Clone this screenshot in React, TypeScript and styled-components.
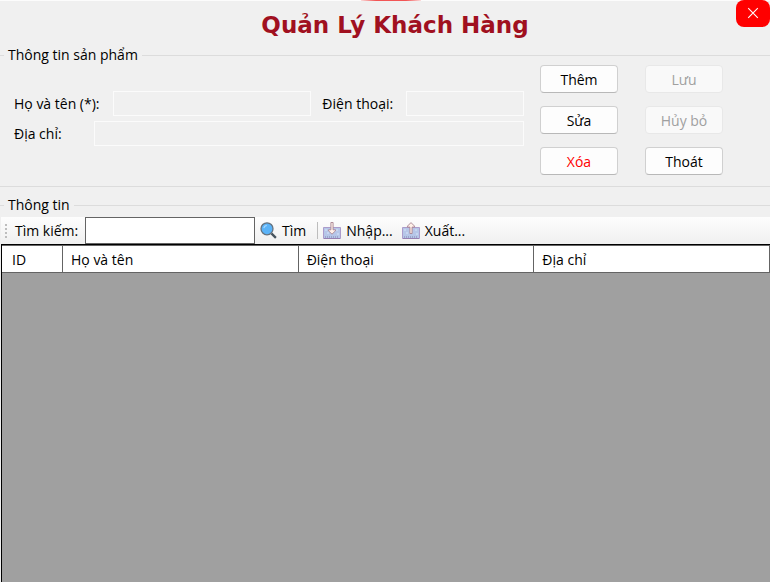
import React, { useState } from "react";
import styled, { createGlobalStyle } from "styled-components";

const GlobalStyle = createGlobalStyle`
  *, *::before, *::after { box-sizing: border-box; }
  body {
    margin: 0;
    background: #f0f0f0;
    color: #000;
    font: 14px/20px "Open Sans", "Noto Sans", sans-serif;
  }
  button, input { font: inherit; color: inherit; }
`;

const Window = styled.main`
  position: relative;
  display: flex;
  flex-direction: column;
  min-height: 100vh;
  border-top: 1px solid #fcfcfc;
`;

const TopAccent = styled.div`
  position: absolute;
  top: -1px;
  left: 50%;
  width: 60px;
  height: 1px;
  margin-left: -24px;
  background: linear-gradient(90deg, #fcdcdc, #f25555 25%, #f25555 75%, #fcdcdc);
`;

const Header = styled.header`
  display: flex;
  justify-content: center;
  height: 44px;
  padding: 8px 40px 0 60px;
`;

const Title = styled.h1`
  margin: 0;
  color: #a01020;
  font: bold 23px/32px "DejaVu Sans", sans-serif;
  white-space: nowrap;
`;

const CloseButton = styled.button`
  position: absolute;
  top: -1px;
  right: 0;
  display: flex;
  align-items: center;
  justify-content: center;
  width: 34px;
  height: 27px;
  padding: 0 0 2px;
  border: 0;
  border-radius: 8px;
  background: #ff0000;
  color: #fff;
`;

const FormGroup = styled.fieldset`
  min-width: 0;
  margin: 0;
  padding: 0;
  border: 0 solid #dcdcdc;
  border-width: 1px 0;
`;

const Legend = styled.legend`
  margin-left: 4px;
  padding: 0 4px;
`;

const ListGroup = styled.section`
  display: flex;
  flex: 1;
  flex-direction: column;
`;

const GroupHeading = styled.h2`
  display: flex;
  align-items: center;
  gap: 4px;
  margin: 8px 0 2px;
  font: inherit;
  &::before, &::after {
    content: "";
    width: 4px;
    height: 1px;
    background: #dcdcdc;
  }
  &::after { flex: 1; }
`;

const FormBody = styled.div`
  display: flex;
  gap: 16px;
  padding: 0 47px 11px 14px;
`;

const Fields = styled.div`
  display: flex;
  flex: 1;
  flex-direction: column;
  gap: 5px;
  min-width: 0;
  padding-top: 26px;
`;

const FieldRow = styled.div`
  display: flex;
  align-items: center;
`;

const FieldLabel = styled.label<{ $width: number; $gap?: number }>`
  flex: none;
  width: ${(p) => p.$width}px;
  margin-left: ${(p) => p.$gap ?? 0}px;
  white-space: nowrap;
`;

const FieldInput = styled.input<{ $grow: number }>`
  flex: ${(p) => p.$grow} 1 0;
  min-width: 0;
  height: 25px;
  padding: 0 4px;
  border: 1px solid #fbfbfb;
  background: #f0f0f0;
`;

const Actions = styled.div`
  display: grid;
  grid-template-columns: 78px 78px;
  grid-auto-rows: 28px;
  gap: 13px 27px;
`;

const ActionButton = styled.button<{ $danger?: boolean }>`
  padding: 1px 0 0;
  border: 1px solid #d0d0d0;
  border-bottom-color: #b8b8b8;
  border-radius: 4px;
  background: #fdfdfd;
  color: ${(p) => (p.$danger ? "#ff0000" : "#000")};
  &:disabled {
    border-color: #e8e8e8;
    background: #f9f9f9;
    color: #a0a0a0;
  }
`;

const Toolbar = styled.div`
  display: flex;
  align-items: center;
  height: 27px;
  margin-left: 1px;
  padding-left: 4px;
  background: linear-gradient(#fdfdfd, #f0f0f0);
`;

const Grip = styled.span`
  width: 2px;
  height: 14px;
  margin-right: 8px;
  background: repeating-linear-gradient(#bdbdbd 0 2px, transparent 2px 4px);
`;

const SearchLabel = styled.label`
  width: 70px;
  white-space: nowrap;
`;

const SearchInput = styled.input`
  width: 170px;
  height: 27px;
  padding: 0 4px;
  border: 1px solid #646464;
  background: #fff;
`;

const ToolButton = styled.button<{ $gap?: number }>`
  display: flex;
  align-items: center;
  gap: 5px;
  margin-left: ${(p) => p.$gap ?? 5}px;
  padding: 0;
  border: 0;
  background: none;
  white-space: nowrap;
  svg { flex: none; }
`;

const Separator = styled.span`
  width: 1px;
  height: 17px;
  margin-left: 11px;
  background: #bdbdbd;
`;

const GridArea = styled.div`
  flex: 1;
  margin-left: 1px;
  border-top: 1px solid #000;
  border-left: 1px solid #000;
  background: #a0a0a0;
`;

const Table = styled.table`
  width: 100%;
  border-spacing: 0;
  border-top: 1px solid #646464;
  table-layout: fixed;
`;

const HeadCell = styled.th<{ $width?: number }>`
  width: ${(p) => (p.$width ? `${p.$width}px` : "auto")};
  height: 27px;
  padding: 1px 8px 0;
  border-right: 1px solid #646464;
  border-bottom: 1px solid #646464;
  background: #fff;
  font-weight: normal;
  text-align: left;
  &:first-child { padding-left: 10px; }
`;

const CloseIcon = () => (
  <svg width="12" height="12" viewBox="0 0 12 12" stroke="currentColor" strokeWidth="1.1" aria-hidden="true">
    <path d="M1.2 1.2 10.8 10.8M10.8 1.2 1.2 10.8" />
  </svg>
);

const SearchIcon = () => (
  <svg width="17" height="17" viewBox="0 0 17 17" fill="none" aria-hidden="true">
    <path d="m11.4 11.4 4.5 4.5" stroke="#46535d" strokeWidth="2.3" />
    <circle cx="7" cy="6.8" r="6" fill="#5ab3f8" stroke="#65727f" strokeWidth="1.3" />
    <path d="M3.8 6.2a3.5 3.5 0 0 1 3-2.8" stroke="#a4d8ff" strokeWidth="1.2" />
  </svg>
);

const TransferIcon = ({ up = false }: { up?: boolean }) => (
  <svg width="18" height="18" viewBox="0 0 18 18" aria-hidden="true">
    <path d="M.5 5.5h17v11H.5z" fill="#b6c6e8" stroke="#ab9ccb" />
    <path d="M1 16.5h16" stroke="#9680b2" />
    <path d="M2.5 14v2M4.5 14v2M6.5 14v2M8.5 14v2M10.5 14v2M12.5 14v2M14.5 14v2" stroke="#8f95bd" strokeWidth=".7" />
    <path d="M2 8h2M4 11h2M13 8h2M14 12h2" stroke="#d7e4f7" />
    <path
      d={up ? "M9 .6 5.5 4.1v1h2.4v6.4h2.2V5.1h2.4v-1z" : "M7.9.5h2.2v7.3h2.4v1L9 12.2 5.5 8.8v-1h2.4z"}
      fill="#fff1e9"
      stroke="#a88391"
      strokeWidth=".9"
    />
  </svg>
);

const actions = [
  { label: "Thêm" },
  { label: "Lưu", disabled: true },
  { label: "Sửa" },
  { label: "Hủy bỏ", disabled: true },
  { label: "Xóa", danger: true },
  { label: "Thoát" },
];

const columns = [{ label: "ID", width: 61 }, { label: "Họ và tên" }, { label: "Điện thoại" }, { label: "Địa chỉ" }];

export default function App() {
  const [query, setQuery] = useState("");

  return (
    <>
      <GlobalStyle />
      <Window>
        <TopAccent />
        <Header>
          <Title>Quản Lý Khách Hàng</Title>
          <CloseButton type="button" aria-label="Đóng">
            <CloseIcon />
          </CloseButton>
        </Header>

        <FormGroup>
          <Legend>Thông tin sản phẩm</Legend>
          <FormBody>
            <Fields>
              <FieldRow>
                <FieldLabel htmlFor="name" $width={99}>Họ và tên (*):</FieldLabel>
                <FieldInput id="name" $grow={7} disabled />
                <FieldLabel htmlFor="phone" $width={84} $gap={11}>Điện thoại:</FieldLabel>
                <FieldInput id="phone" $grow={4} disabled />
              </FieldRow>
              <FieldRow>
                <FieldLabel htmlFor="address" $width={80}>Địa chỉ:</FieldLabel>
                <FieldInput id="address" $grow={1} disabled />
              </FieldRow>
            </Fields>
            <Actions>
              {actions.map((a) => (
                <ActionButton key={a.label} type="button" disabled={a.disabled} $danger={a.danger}>
                  {a.label}
                </ActionButton>
              ))}
            </Actions>
          </FormBody>
        </FormGroup>

        <ListGroup aria-labelledby="list-heading">
          <GroupHeading id="list-heading">Thông tin</GroupHeading>
          <Toolbar>
            <Grip />
            <SearchLabel htmlFor="search">Tìm kiếm:</SearchLabel>
            <SearchInput id="search" value={query} onChange={(e) => setQuery(e.target.value)} />
            <ToolButton type="button"><SearchIcon />Tìm</ToolButton>
            <Separator />
            <ToolButton type="button"><TransferIcon />Nhập...</ToolButton>
            <ToolButton type="button" $gap={9}><TransferIcon up />Xuất...</ToolButton>
          </Toolbar>
          <GridArea>
            <Table>
              <thead>
                <tr>
                  {columns.map((c) => (
                    <HeadCell key={c.label} scope="col" $width={c.width}>{c.label}</HeadCell>
                  ))}
                </tr>
              </thead>
            </Table>
          </GridArea>
        </ListGroup>
      </Window>
    </>
  );
}
